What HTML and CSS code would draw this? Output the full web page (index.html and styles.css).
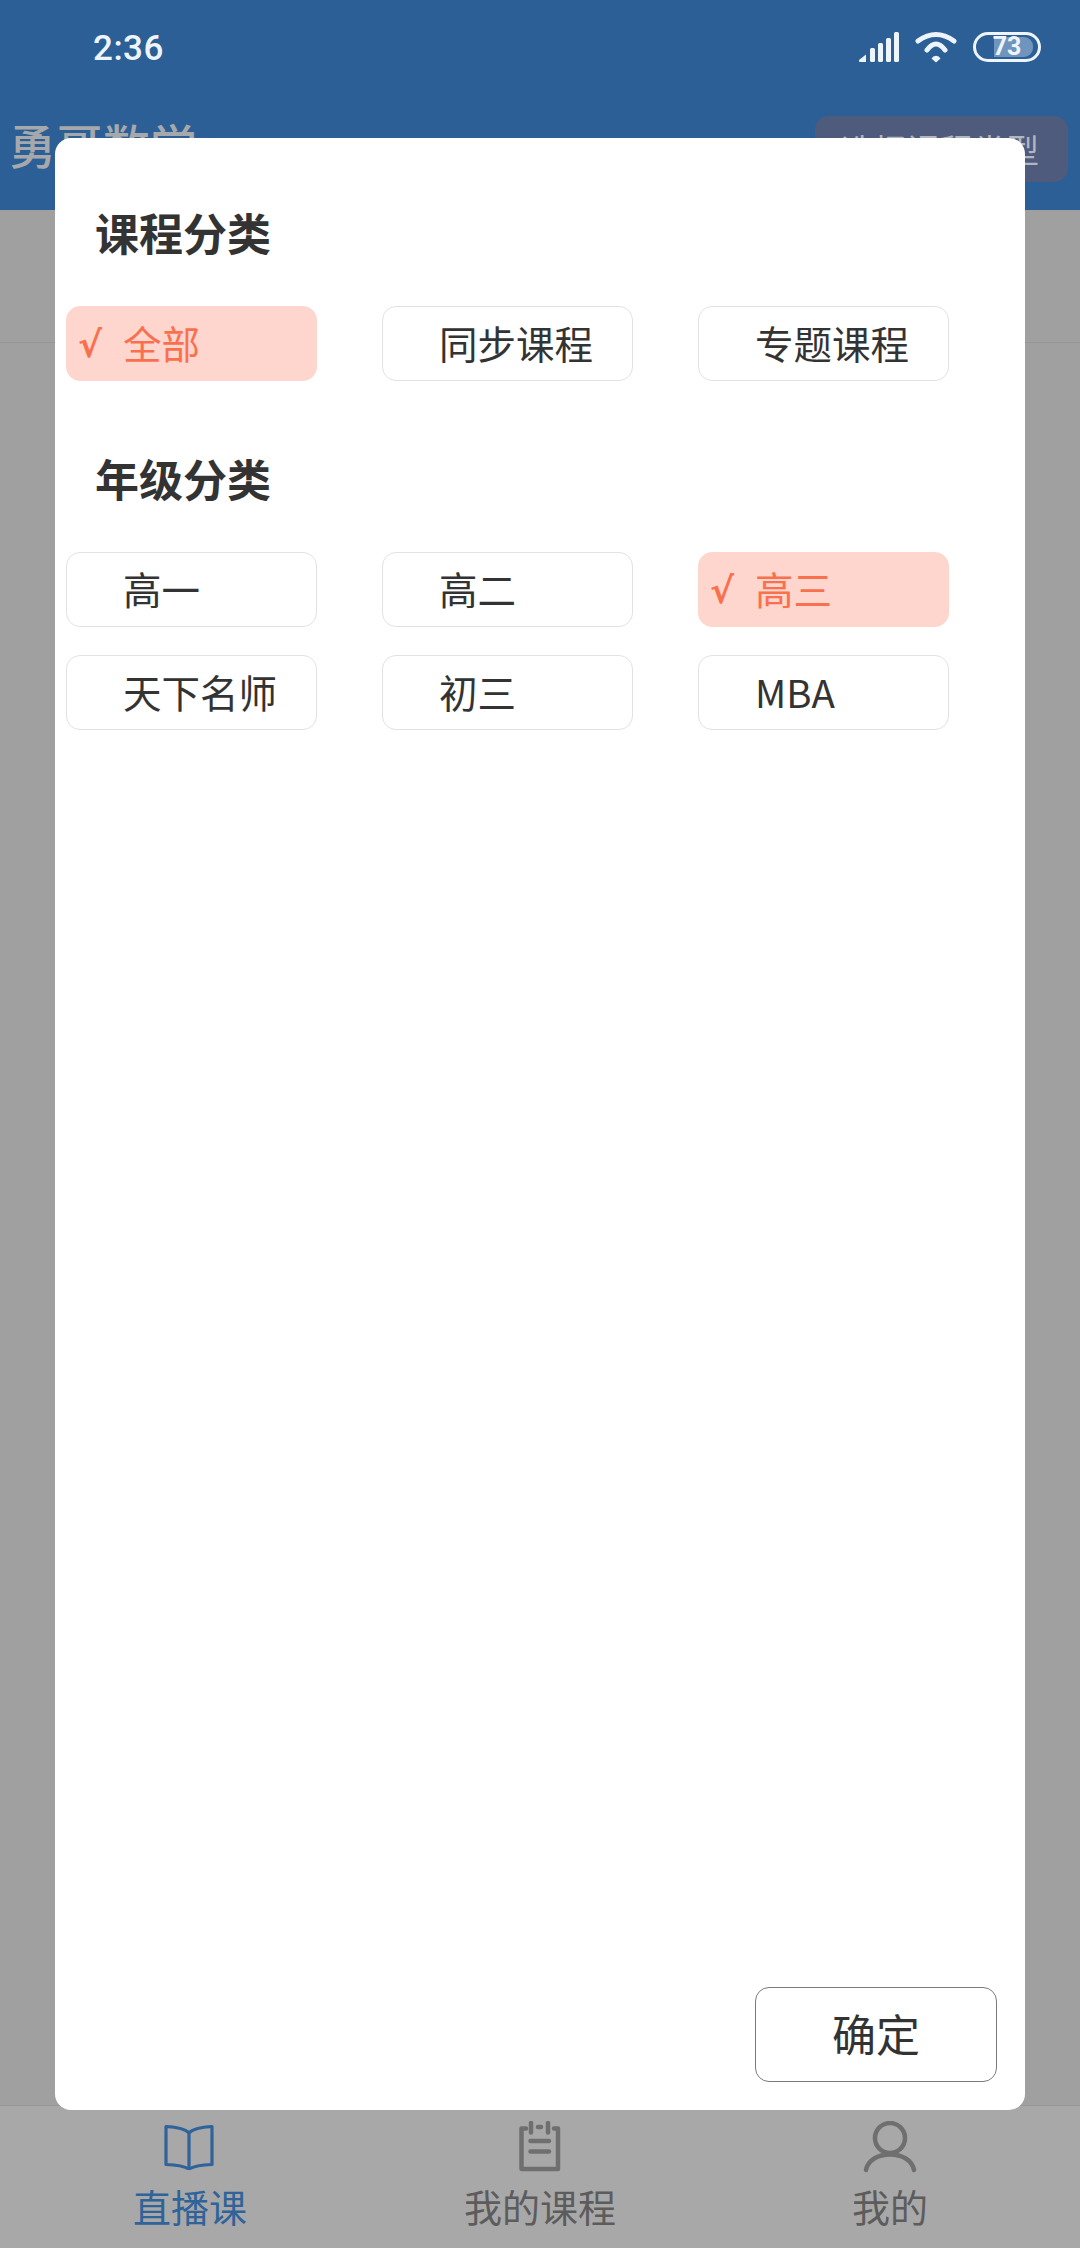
FILE: index.html
```html
<!DOCTYPE html>
<html lang="zh-CN">
<head>
<meta charset="utf-8">
<title>勇哥数学</title>
<link rel="stylesheet" href="styles.css">
</head>
<body>
<div class="page">
  <header class="top">
    <div class="status">
      <span class="time">2:36</span>
      <div class="status-icons">
        <svg width="40" height="30" viewBox="0 0 40 30"><g fill="#eef4fb"><path d="M0 28l7-5.500V30H1a1 1 0 0 1-1-1z"/><rect x="11" y="16" width="5" height="14" rx="1.500"/><rect x="19" y="11" width="5" height="19" rx="1.500"/><rect x="27" y="6" width="5" height="24" rx="1.500"/><rect x="35" y="0" width="5" height="30" rx="1.500"/></g></svg>
        <svg width="42" height="32" viewBox="0 0 42 32"><g fill="none" stroke="#eef4fb" stroke-width="5" stroke-linecap="round"><path d="M3 10Q21 -3 39 10"/><path d="M12 19Q21 7 30 19"/></g><path d="M16.500 27.500a5 5 0 0 1 9 0l-4.500 4z" fill="#eef4fb"/></svg>
        <div class="battery"><div class="battery-fill"></div><span class="battery-num">73</span></div>
      </div>
    </div>
    <div class="appbar">
      <span class="brand">勇哥数学</span>
      <span class="type-btn">选择课程类型</span>
    </div>
  </header>
  <div class="band"></div>
  <main class="content"></main>
  <nav class="tabs">
    <div class="tab active">
      <div class="tab-icon"><svg width="52" height="46" viewBox="0 0 52 46"><path d="M25 9C21 4.500 12 3 2 2.500V40.500C12 41 20 42 25 45C30 42 38 41 48 40.500V2.500C38 3 29 4.500 25 9ZM25 9V45" fill="none" stroke="#2f6399" stroke-width="3.200" stroke-linejoin="round"/></svg></div>
      <span class="tab-label">直播课</span>
    </div>
    <div class="tab">
      <div class="tab-icon"><svg width="42" height="52" viewBox="0 0 42 52"><g fill="none" stroke="#6f6f6f" stroke-width="4.500" stroke-linecap="round" stroke-linejoin="round"><path d="M7 7.500H2.500V48H39V7.500H35"/><path d="M12 2V11.500"/><path d="M29 2V11.500"/><path d="M19 6H22"/><path d="M11.500 20H30"/><path d="M11.500 30.500H30"/></g></svg></div>
      <span class="tab-label">我的课程</span>
    </div>
    <div class="tab">
      <div class="tab-icon"><svg width="54" height="52" viewBox="0 0 54 52"><g fill="none" stroke="#6f6f6f" stroke-width="4.500" stroke-linecap="round"><circle cx="27" cy="17" r="15"/><path d="M3 49C5 39 15 33.500 27 33.500S49 39 51 49"/></g></svg></div>
      <span class="tab-label">我的</span>
    </div>
  </nav>

  <section class="modal">
    <h2 class="group-title">课程分类</h2>
    <div class="chips">
      <div class="chip on"><span class="tick">√</span><span>全部</span></div>
      <div class="chip"><span class="tick"></span><span>同步课程</span></div>
      <div class="chip"><span class="tick"></span><span>专题课程</span></div>
    </div>
    <h2 class="group-title second">年级分类</h2>
    <div class="chips">
      <div class="chip"><span class="tick"></span><span>高一</span></div>
      <div class="chip"><span class="tick"></span><span>高二</span></div>
      <div class="chip on"><span class="tick">√</span><span>高三</span></div>
      <div class="chip"><span class="tick"></span><span>天下名师</span></div>
      <div class="chip"><span class="tick"></span><span>初三</span></div>
      <div class="chip"><span class="tick"></span><span>MBA</span></div>
    </div>
    <button class="confirm" type="button">确定</button>
  </section>
</div>
</body>
</html>
```
FILE: styles.css
```css
* { box-sizing: border-box; }
html, body { margin: 0; padding: 0; }
body { font-family: "Noto Sans CJK SC", "Noto Sans", sans-serif; color: #333; }

.page {
  position: relative;
  width: 1080px;
  height: 2248px;
  overflow: hidden;
  display: flex;
  flex-direction: column;
  background: #a0a0a0;
}

.top { height: 210px; background: #2b5f95; display: flex; flex-direction: column; }

.status {
  height: 96px;
  display: flex;
  align-items: center;
  justify-content: space-between;
  padding: 0 39px 0 93px;
}
.time { font-family: Roboto, sans-serif; font-size: 35px; font-weight: 500; color: #eef4fb; letter-spacing: 0.5px; }
.status-icons { display: flex; align-items: center; gap: 16px; margin-bottom: 2px; }

.battery {
  position: relative;
  width: 68px;
  height: 30px;
  border: 3px solid #eef4fb;
  border-radius: 15px;
  display: flex;
  align-items: center;
  justify-content: center;
}
.battery-fill {
  position: absolute;
  left: 18px;
  top: 2px;
  width: 39px;
  height: 20px;
  background: #6f94bd;
  border-radius: 0 9px 9px 0;
}
.battery-num { position: relative; font-family: Roboto, sans-serif; font-size: 25px; font-weight: 700; color: #eef4fb; line-height: 24px; }

.appbar {
  flex: 1;
  display: flex;
  justify-content: space-between;
  align-items: flex-start;
  padding: 20px 12px 0 9px;
}
.brand { font-size: 47px; line-height: 56px; font-weight: 500; color: #a6a8ab; }
.type-btn {
  width: 253px;
  height: 66px;
  background: #4f5b7d;
  border-radius: 14px;
  padding-right: 29px;
  text-align: right;
  font-size: 33px;
  line-height: 66px;
  color: #b4b6bf;
}

.band { height: 133px; background: #a0a0a0; border-bottom: 1px solid #979797; box-shadow: 0 2px 3px rgba(0, 0, 0, 0.06); }
.content { flex: 1; background: #a0a0a0; }

.tabs {
  height: 143px;
  flex: none;
  background: #a8a8a8;
  border-top: 1px solid #969696;
  display: grid;
  grid-template-columns: repeat(3, 1fr);
  padding: 15px 15px 0;
}
.tab { display: flex; flex-direction: column; align-items: center; color: #5c5c5c; }
.tab.active { color: #2f6399; }
.tab-icon { height: 52px; display: flex; align-items: center; justify-content: center; }
.tab-label { margin-top: 8px; font-size: 38px; line-height: 50px; }

.modal {
  position: absolute;
  left: 55px;
  top: 138px;
  width: 970px;
  height: 1972px;
  background: #fff;
  border-radius: 16px;
  padding: 64px 28px 28px 11px;
  display: flex;
  flex-direction: column;
}
.group-title { margin: 0 0 44px 29px; font-size: 44px; line-height: 60px; font-weight: 700; color: #333; }
.group-title.second { margin-top: 67px; }

.chips { display: grid; grid-template-columns: repeat(3, 251px); column-gap: 65px; row-gap: 28px; }
.chip {
  height: 75px;
  border: 1px solid #e2e2e2;
  border-radius: 14px;
  display: flex;
  align-items: center;
  padding: 0 0 3px 11px;
  font-size: 38.500px;
  color: #333;
  background: #fff;
}
.chip.on { background: #ffd6cd; border-color: #ffd6cd; color: #f9704f; }
.tick { width: 45px; flex: none; padding-top: 6px; font-size: 36px; line-height: 40px; font-weight: 700; font-family: "DejaVu Sans", sans-serif; }

.confirm {
  margin-top: auto;
  align-self: flex-end;
  width: 242px;
  height: 95px;
  border: 1px solid #7a7a7a;
  border-radius: 14px;
  background: #fff;
  padding: 0 0 3px;
  font-family: inherit;
  font-size: 44px;
  color: #333;
}
```
